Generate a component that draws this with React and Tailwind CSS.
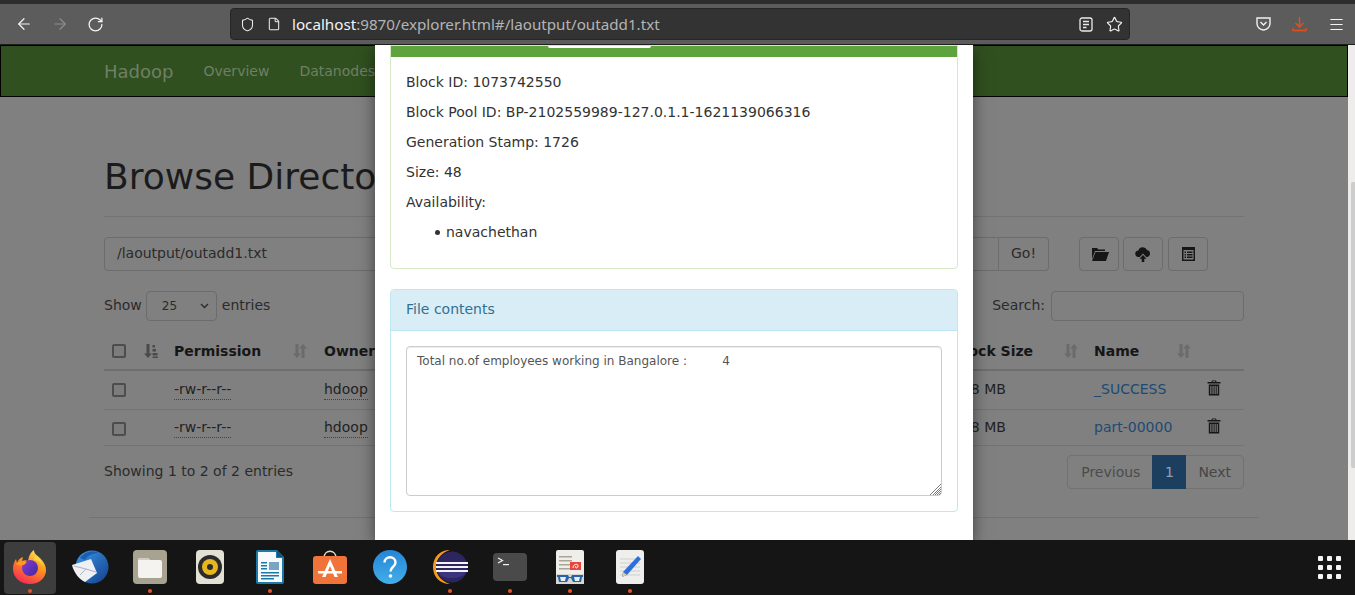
import { ArrowLeft, ArrowRight, RotateCw, Shield, File, Star, Menu } from "lucide-react";

const SortIcon = ({ active }) => (
  <svg width="14" height="16" viewBox="0 0 14 16" className={active ? "text-[#4a4a4a]" : "text-[#6b6b6b]"} fill="currentColor">
    <path d="M2.500 1h3v9.500H8L4 15 0 10.500h2.500z" />
    {active ? (
      <path d="M8.500 2h2.500v2.500H8.500zM8.500 6h3.500v2.500H8.500zM8.500 10h5v2.500h-5zM8.500 13.400h5.500V15H8.500z" />
    ) : (
      <path d="M8.500 15V5.500H6L10 1l4 4.500h-2.500V15z" />
    )}
  </svg>
);

const TrashIcon = () => (
  <svg width="14" height="16" viewBox="0 0 14 16" fill="#161616">
    <path d="M5 .5h4l.6 1.500H13.500v1.500H.5V2h3.900zM5.800 1.300 5.600 2h2.800l-.2-.7z" />
    <path d="M1.800 4.500h10.400V15.500H1.800zM3.300 6v8h1.100V6zM5.500 6v8h1.100V6zM7.600 6v8h1.100V6zM9.700 6v8h1.100V6z" fillRule="evenodd" />
  </svg>
);

const Checkbox = () => <div className="w-[14px] h-[14px] rounded-[2px] border-2 border-[#4d4d4d] bg-[#7c7c7c]" />;

const Firefox = () => (
  <svg width="36" height="36" viewBox="0 0 36 36">
    <defs>
      <linearGradient id="ffa" x1="0.7" y1="0" x2="0.2" y2="1">
        <stop offset="0" stopColor="#ffe14a" />
        <stop offset="0.45" stopColor="#ff8a1f" />
        <stop offset="1" stopColor="#f5215b" />
      </linearGradient>
      <linearGradient id="ffb" x1="0" y1="0" x2="1" y2="1">
        <stop offset="0" stopColor="#8a3bd6" />
        <stop offset="1" stopColor="#3c2a9e" />
      </linearGradient>
    </defs>
    <path d="M22 1c0 4 3 5 6 8 4 4 6 8 6 12 0 8-7 14-16 14S1 29 1 20c0-4 1-7 3-10l1 4c1-3 3-5 6-6l-1 4c2-1 4-1 6 0 1-6 3-9 6-11z" fill="url(#ffa)" />
    <circle cx="18" cy="19" r="8" fill="url(#ffb)" />
    <path d="M4 15c3-3 7-4 11-2l-3 3c-3 0-5 1-8-1z" fill="#ff9a1f" />
    <path d="M23 6c4 2 7 6 8 11-2-4-5-6-9-6z" fill="#ffd53a" />
  </svg>
);

const Thunderbird = () => (
  <svg width="38" height="38" viewBox="0 0 38 38">
    <defs>
      <linearGradient id="tb" x1="0" y1="0" x2="1" y2="1">
        <stop offset="0" stopColor="#3c9ae8" />
        <stop offset="1" stopColor="#123f8c" />
      </linearGradient>
    </defs>
    <circle cx="21" cy="19" r="16.500" fill="url(#tb)" />
    <path d="M1 17 20 11l6 14-12 9C8 31 3 25 1 17z" fill="#eef0f4" />
    <path d="M3 18l12 3 10 3M9 27l6-6" stroke="#a9b3c4" strokeWidth="1" fill="none" />
    <path d="M9 10c5-7 13-8 19-5-6 0-11 2-14 7z" fill="#1b5db0" />
  </svg>
);

const Files = () => (
  <svg width="34" height="34" viewBox="0 0 34 34">
    <rect width="34" height="34" rx="4" fill="#a8a291" />
    <path d="M5 10a2 2 0 0 1 2-2h8l2 2h10a2 2 0 0 1 2 2v14a2 2 0 0 1-2 2H7a2 2 0 0 1-2-2z" fill="#f4f3f0" />
    <path d="M5 10a2 2 0 0 1 2-2h8l2 2z" fill="#cfcbc0" />
  </svg>
);

const Rhythmbox = () => (
  <svg width="28" height="34" viewBox="0 0 28 34">
    <rect width="28" height="34" rx="4" fill="#e3e0d6" />
    <circle cx="14" cy="17" r="12" fill="#2b2b2b" />
    <circle cx="14" cy="17" r="8" fill="#e6b71e" />
    <circle cx="14" cy="17" r="3" fill="#2b2b2b" />
  </svg>
);

const Writer = () => (
  <svg width="28" height="34" viewBox="0 0 28 34">
    <path d="M2 0h19l7 7v25a2 2 0 0 1-2 2H2a2 2 0 0 1-2-2V2a2 2 0 0 1 2-2z" fill="#1c7aa8" />
    <path d="M2 2h18v6h6v24H2z" fill="#f7fafc" />
    <path d="M21 0l7 7h-7z" fill="#10587d" />
    <rect x="5" y="12" width="6" height="1.500" fill="#1c7aa8" />
    <rect x="5" y="15" width="6" height="1.500" fill="#1c7aa8" />
    <rect x="5" y="18" width="6" height="1.500" fill="#1c7aa8" />
    <rect x="13" y="12" width="10" height="8" fill="#7aa5c0" />
    <rect x="5" y="22" width="18" height="1.500" fill="#1c7aa8" />
    <rect x="5" y="25" width="18" height="1.500" fill="#1c7aa8" />
    <rect x="5" y="28" width="13" height="1.500" fill="#1c7aa8" />
  </svg>
);

const Software = () => (
  <svg width="34" height="34" viewBox="0 0 34 34">
    <path d="M11 8c0-9 12-9 12 0" fill="none" stroke="#e8d9c8" strokeWidth="1.500" />
    <rect y="6" width="34" height="28" rx="3" fill="#f0743a" />
    <path d="M17 9l8 18h-3.500L17 16l-4.500 11H9z" fill="#fff" />
    <rect x="5" y="21" width="24" height="2.500" fill="#fff" />
  </svg>
);

const Help = () => (
  <svg width="34" height="34" viewBox="0 0 34 34">
    <defs>
      <linearGradient id="hp" x1="0" y1="0" x2="0" y2="1">
        <stop offset="0" stopColor="#2585d8" />
        <stop offset="1" stopColor="#43aee8" />
      </linearGradient>
    </defs>
    <circle cx="17" cy="17" r="17" fill="url(#hp)" />
    <path d="M11.500 12.500c0-7 11-7 11 0 0 4.500-5 4-5 9" fill="none" stroke="#fff" strokeWidth="2.400" />
    <circle cx="17.500" cy="26" r="1.800" fill="#fff" />
  </svg>
);

const Eclipse = () => (
  <svg width="36" height="34" viewBox="0 0 36 34">
    <path d="M18 0C8 0 1 7 1 17s7 17 17 17C11 32 4 26 4 17S11 2 18 0z" fill="#f59a1c" />
    <circle cx="20" cy="17" r="15.500" fill="#2c2560" />
    <path d="M6 22c3 8 25 8 28 0z" fill="#3d3480" />
    <rect x="4" y="12" width="32" height="2" fill="#f3f2f8" />
    <rect x="4" y="16" width="32" height="2" fill="#f3f2f8" />
    <rect x="4" y="20" width="32" height="2" fill="#f3f2f8" />
  </svg>
);

const Terminal = () => (
  <svg width="34" height="28" viewBox="0 0 34 28">
    <rect width="34" height="28" rx="4" fill="#4a4a4a" />
    <path d="M5 5l4.500 2.500L5 10" fill="none" stroke="#f2f2f2" strokeWidth="1.200" />
    <rect x="10" y="11" width="6" height="1.200" fill="#f2f2f2" />
  </svg>
);

const Viewer = () => (
  <svg width="28" height="34" viewBox="0 0 28 34">
    <rect width="28" height="34" rx="2" fill="#efeeea" />
    <rect x="3" y="6" width="13" height="1.500" fill="#a8a594" />
    <rect x="3" y="10" width="13" height="1.500" fill="#a8a594" />
    <rect x="3" y="14" width="13" height="1.500" fill="#a8a594" />
    <rect x="3" y="18" width="13" height="1.500" fill="#a8a594" />
    <rect x="14" y="12" width="11" height="8" fill="#e8463c" />
    <path d="M17 18c0-4 5-5 5-2s-4 2-2 0" stroke="#fff" fill="none" />
    <rect y="24" width="28" height="10" fill="#d6d6d2" />
    <path d="M1 25h11l1 2h2l1-2h11v2l-1 0-1 5H17l-2-4h-2l-2 4H3l-1-5-1 0z" fill="#2a62a8" />
    <path d="M4 27h6l-1 4H5zM18 27h6l-1 4h-4z" fill="#e8eef2" />
  </svg>
);

const Editor = () => (
  <svg width="28" height="34" viewBox="0 0 28 34">
    <rect width="28" height="34" rx="3" fill="#eeeeec" />
    <path d="M4 9h20M4 13h20M4 17h20M4 21h20M4 25h20" stroke="#cfcfca" />
    <path d="M22 6l3 3-14 16-5 2 1-5z" fill="#2f6fdc" />
    <path d="M7 22l4 3-5 2z" fill="#e8c79a" />
  </svg>
);

const dockItems = [
  { icon: <Firefox />, dot: true, active: true },
  { icon: <Thunderbird /> },
  { icon: <Files />, dot: true },
  { icon: <Rhythmbox /> },
  { icon: <Writer />, dot: true },
  { icon: <Software /> },
  { icon: <Help /> },
  { icon: <Eclipse />, dot: true },
  { icon: <Terminal />, dot: true },
  { icon: <Viewer />, dot: true },
  { icon: <Editor />, dot: true },
];

const rows = [
  { name: "_SUCCESS", rowClass: "h-[39px] pb-[1px]", boxPad: "pt-[1px]" },
  { name: "part-00000", rowClass: "h-[36px]", boxPad: "pt-[2px]" },
];

const gridCols = "grid grid-cols-[70px_150px_629px_141px_114px_36px] items-center";

const App = () => {
  return (
    <div className="flex flex-col w-[1355px] h-[595px] overflow-hidden font-['DejaVu_Sans',sans-serif] text-[14px] text-[#1b1b1b] bg-[#808080]">
      <div className="h-[4px] bg-[#2d2d2d]" />

      {/* browser toolbar */}
      <div className="h-[41px] bg-[#5c5c5c] border-b border-[#1f1f1f] flex items-center text-[#f4f4f4]">
        <div className="w-[230px] flex items-center pl-[15px] gap-[18px]">
          <ArrowLeft size={18} strokeWidth={1.6} />
          <ArrowRight size={18} strokeWidth={1.6} className="text-[#8d8d8d]" />
          <RotateCw size={17} strokeWidth={1.8} />
        </div>
        <div className="w-[900px] h-[32px] bg-[#333333] border border-[#262626] rounded-[4px] flex items-center pl-[9px] pr-[6px] font-['Noto_Sans',sans-serif] text-[15.200px]">
          <Shield size={15} strokeWidth={1.7} className="text-[#eaeaea]" />
          <File size={14} strokeWidth={1.8} className="ml-[12px] text-[#eaeaea]" />
          <span className="ml-[11px]">
            localhost<span className="text-[#b4b4b4]">:9870/explorer.html#/laoutput/outadd1.txt</span>
          </span>
          <div className="ml-auto flex items-center gap-[13px]">
            <svg width="14" height="15" viewBox="0 0 14 15" fill="none" stroke="#eaeaea" strokeWidth="1.300">
              <rect x="1" y="1" width="12" height="13" rx="2" />
              <path d="M4 4.500h6M4 7.500h6M4 10.500h3.500" />
            </svg>
            <Star size={17} strokeWidth={1.6} />
          </div>
        </div>
        <div className="flex-1 flex items-center pl-[126px] gap-[21px]">
          <svg width="15" height="14" viewBox="0 0 15 14" fill="none" stroke="#f0f0f0" strokeWidth="1.400">
            <path d="M1 1h13v5.500a6.500 6.500 0 0 1-13 0z" />
            <path d="M4.500 5l3 3 3-3" />
          </svg>
          <svg width="15" height="16" viewBox="0 0 15 16" fill="none" stroke="#e2501d" strokeWidth="1.400">
            <path d="M7.500 1v10M3.500 7l4 4 4-4M1 12v2.500h13V12" />
          </svg>
          <Menu size={17} strokeWidth={1.6} />
        </div>
      </div>

      <div className="relative flex-1 flex overflow-hidden">
        {/* page behind the modal */}
        <div className="w-[1348px]">
          <nav className="h-[52px] bg-[#30501f] border border-black flex items-center pl-[103px] text-[#6f7f66]">
            <span className="text-[18px] mr-[30px]">Hadoop</span>
            <span className="mr-[30px]">Overview</span>
            <span>Datanodes</span>
          </nav>

          <div className="w-[1170px] mx-auto">
            <div className="px-[15px]">
              <div className="mt-[60px] pb-[19px] border-b border-[#737373]">
                <h1 className="text-[36px] leading-[40px] text-[#1b1b1b]">Browse Directory</h1>
              </div>

              <div className="mt-[20px] flex items-center">
                <div className="w-[945px] h-[34px] flex text-[#2b2b2b]">
                  <div className="flex-1 border border-[#6c6c6c] rounded-l-[4px] pl-[12px] pb-[1px] flex items-center">/laoutput/outadd1.txt</div>
                  <div className="w-[50px] border border-l-0 border-[#6c6c6c] rounded-r-[4px] pb-[1px] flex items-center justify-center">Go!</div>
                </div>
                <div className="ml-[30px] flex gap-[4px]">
                  <div className="w-[40px] h-[34px] border border-[#6c6c6c] rounded-[4px] flex items-center justify-center pl-[2px]">
                    <svg width="18" height="14" viewBox="0 0 18 14" fill="#161616">
                      <path d="M1 1h5l1.500 1.500H14V4H4L1 12z" />
                      <path d="M4.500 5H18l-3 9H1z" />
                    </svg>
                  </div>
                  <div className="w-[40px] h-[34px] border border-[#6c6c6c] rounded-[4px] flex items-center justify-center">
                    <svg width="16" height="15" viewBox="0 0 16 15" fill="#161616">
                      <path d="M3.800 10a3.300 3.300 0 0 1-.4-6.600A4.600 4.600 0 0 1 12 3a3.600 3.600 0 0 1 .4 7h-1.200L8 6.500 4.800 10z" />
                      <path d="M8 8l3.500 3.800H9.300V15H6.700v-3.200H4.500z" />
                    </svg>
                  </div>
                  <div className="ml-[1px] w-[40px] h-[34px] border border-[#6c6c6c] rounded-[4px] flex items-center justify-center">
                    <svg width="13" height="14" viewBox="0 0 13 14" fill="#161616">
                      <path fillRule="evenodd" d="M0 0h13v14H0zM1.500 3v9.500h10V3z" />
                      <path d="M2.500 4.500h1.500V6H2.500zM5 4.500h5.500V6H5zM2.500 7h1.500v1.500H2.500zM5 7h5.500v1.500H5zM2.500 9.500h1.500V11H2.500zM5 9.500h5.500V11H5z" />
                    </svg>
                  </div>
                </div>
              </div>

              <div className="mt-[20px] h-[30px] flex items-center text-[#2b2b2b]">
                <span className="-mt-[2px]">Show</span>
                <div className="ml-[4px] mr-[5px] w-[71px] h-[30px] border border-[#6c6c6c] rounded-[4px] flex items-center justify-between pl-[15px] pr-[7px] text-[12px]">
                  25
                  <svg width="9" height="6" viewBox="0 0 9 6" fill="none" stroke="#2b2b2b" strokeWidth="1.400">
                    <path d="M1 1l3.500 3.500L8 1" />
                  </svg>
                </div>
                <span className="-mt-[2px]">entries</span>
                <span className="ml-auto mr-[6px] -mt-[2px]">Search:</span>
                <div className="w-[193px] h-[30px] border border-[#6c6c6c] rounded-[4px]" />
              </div>

              <div className={`mt-[12px] h-[38px] border-b-2 border-[#6e6e6e] font-bold text-[#161616] ${gridCols}`}>
                <div className="flex items-center pl-[8px] gap-[18px]">
                  <Checkbox />
                  <SortIcon active />
                </div>
                <div className="flex items-center justify-between pr-[17px]">
                  Permission
                  <SortIcon />
                </div>
                <div>Owner</div>
                <div className="flex items-center justify-between pr-[16px]">
                  Block Size
                  <SortIcon />
                </div>
                <div className="flex items-center justify-between pr-[17px]">
                  Name
                  <SortIcon />
                </div>
                <div />
              </div>

              {rows.map((row) => (
                <div key={row.name} className={`${row.rowClass} border-b border-[#737373] last:border-b-0 text-[#222222] ${gridCols}`}>
                  <div className={`pl-[8px] ${row.boxPad}`}>
                    <Checkbox />
                  </div>
                  <div>
                    <span className="border-b border-dotted border-[#1f4a70] pb-[2px]">-rw-r--r--</span>
                  </div>
                  <div>
                    <span className="border-b border-dotted border-[#1f4a70] pb-[2px]">hdoop</span>
                  </div>
                  <div>128 MB</div>
                  <div className="text-[#1e4a72]">{row.name}</div>
                  <div className="-mt-[3px] -ml-[1px]">
                    <TrashIcon />
                  </div>
                </div>
              ))}

              <div className="mt-[9px] h-[34px] flex items-center justify-between text-[#2b2b2b]">
                <span className="-mt-[2px]">Showing 1 to 2 of 2 entries</span>
                <div className="h-[34px] flex border border-[#727272] rounded-[4px]">
                  <span className="pl-[13px] pr-[12px] flex items-center text-[#4c4c4c]">Previous</span>
                  <span className="w-[34px] -my-[1px] bg-[#1c3f5f] flex items-center justify-center text-[#8ea3b8]">1</span>
                  <span className="px-[12px] flex items-center text-[#464646]">Next</span>
                </div>
              </div>
            </div>

            <div className="mt-[28px] border-t border-[#737373]" />
          </div>
        </div>

        {/* scrollbar */}
        <div className="w-[7px] bg-[#eeedec] pl-[3px] pt-[137px]">
          <div className="w-[4px] h-[286px] bg-[#cdcdcd] rounded-l-[2px]" />
        </div>

        {/* modal */}
        <div className="absolute left-[375px] top-0 bottom-0 w-[598px] bg-white shadow-[0_5px_15px_rgba(0,0,0,0.5)] px-[15px] text-[#333333]">
          <div className="border border-[#d6e9c6] rounded-b-[4px]">
            <div className="relative h-[11px] bg-[#5ea33e]">
              <div className="absolute left-[157px] top-0 w-[103px] h-[2px] bg-white rounded-b-[2px]" />
            </div>
            <div className="p-[15px] pb-[16px] leading-[20px]">
              <p className="mb-[10px]">Block ID: 1073742550</p>
              <p className="mb-[10px]">Block Pool ID: BP-2102559989-127.0.1.1-1621139066316</p>
              <p className="mb-[10px]">Generation Stamp: 1726</p>
              <p className="mb-[10px]">Size: 48</p>
              <p className="mb-[10px]">Availability:</p>
              <ul className="pl-[40px] mb-[10px]">
                <li className="relative">
                  <span className="absolute -left-[11px] top-[8px] w-[5px] h-[5px] rounded-full bg-[#333333]" />
                  navachethan
                </li>
              </ul>
            </div>
          </div>

          <div className="mt-[20px] border border-[#bce8f1] rounded-[4px]">
            <div className="h-[41px] pb-[2px] bg-[#d9edf7] border-b border-[#bce8f1] rounded-t-[3px] flex items-center px-[15px] text-[#31708f]">File contents</div>
            <div className="p-[15px]">
              <div className="relative">
                <textarea
                  readOnly
                  className="block w-full h-[150px] resize-none border border-[#cccccc] rounded-[4px] px-[10px] py-[6px] text-[12px] leading-[17px] text-[#555555] [tab-size:8] outline-none shadow-[inset_0_1px_1px_rgba(0,0,0,0.075)]"
                  value={"Total no.of employees working in Bangalore :\t\t4"}
                />
                {/* resize grip */}
                <svg width="11" height="11" viewBox="0 0 11 11" stroke="#7d7d7d" strokeWidth="1" className="absolute right-[1px] bottom-[1px] pointer-events-none">
                  <path d="M0 11 11 0M3 11l8-8M5 11l6-6M7 11l4-4M9 11l2-2" />
                </svg>
              </div>
            </div>
          </div>
        </div>
      </div>

      {/* ubuntu dock */}
      <div className="h-[55px] bg-[#151515] flex items-center">
        {dockItems.map((item, i) => (
          <div key={i} className="relative w-[60px] h-full flex items-center justify-center">
            {item.active && <div className="absolute left-[4px] top-[2px] w-[52px] h-[52px] rounded-[4px] bg-[#3d3d3d]" />}
            <div className="relative -mt-[2px]">{item.icon}</div>
            {item.dot && <div className="absolute left-[28px] bottom-[2px] w-[4px] h-[4px] rounded-full bg-[#e95420]" />}
          </div>
        ))}
        <div className="ml-auto mr-[14px] grid grid-cols-3 gap-[4px]">
          {Array.from({ length: 9 }).map((_, i) => (
            <div key={i} className="w-[5px] h-[5px] rounded-[1px] bg-[#f5f5f5]" />
          ))}
        </div>
      </div>
    </div>
  );
};

export default App;
